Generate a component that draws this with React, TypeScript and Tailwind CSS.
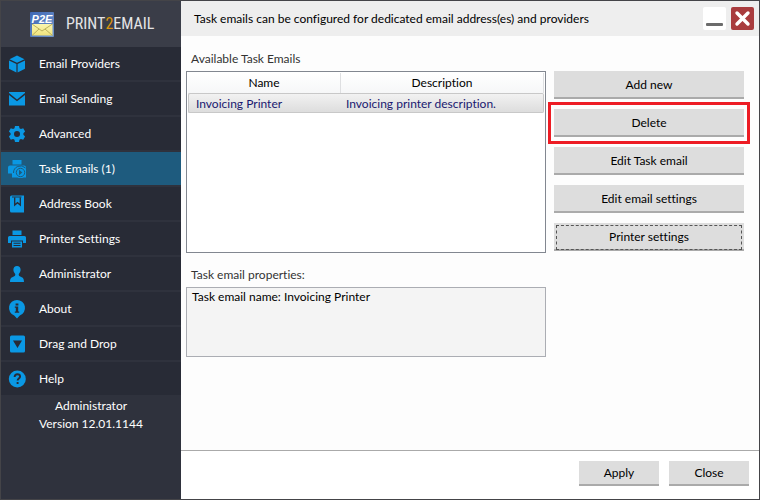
import { useState } from 'react';
import type { ReactNode } from 'react';
import clsx from 'clsx';

const ICONS: Record<string, ReactNode> = {
  cube: (
    <>
      <path d="M9 .5l7.500 3.700L9 7.800 1.500 4.200z" />
      <path d="M1 5.400l7.400 3.500v8.600L1 13.800zM17 5.400L9.600 8.900v8.600L17 13.800z" />
    </>
  ),
  mail: (
    <>
      <path d="M1 2h16v1L9 9.500 1 3z" />
      <path d="M1 5l8 6.300L17 5v10.500H1z" />
    </>
  ),
  gear: (
    <path
      fillRule="evenodd"
      d="M7 1h4l.5 2.300 1.400.8 2.300-.8 1.900 3.300-1.700 1.600v1.600l1.700 1.600-1.900 3.300-2.300-.8-1.400.8L11 17H7l-.5-2.300-1.400-.8-2.300.8-1.900-3.300 1.700-1.600V8.200L.9 6.600l1.900-3.300 2.300.8 1.400-.8zM9 6a3 3 0 100 6 3 3 0 000-6z"
    />
  ),
  task: (
    <>
      <path d="M4.500 0h9v4.500h-9z" />
      <path d="M2 5.500h14a2 2 0 012 2v10H4v-4H0v-6a2 2 0 012-2z" />
      <path d="M5.500 13a7 7 0 0112-5" fill="none" stroke="#1e5b7e" />
      <circle cx="12.500" cy="12.500" r="5.500" />
      <circle cx="12.500" cy="12.500" r="4.200" stroke="#1e5b7e" />
      <path d="M11 9.800l3.400 2.700-3.400 2.700z" fill="#1e5b7e" />
    </>
  ),
  book: (
    <>
      <path d="M3.500.5H16v17H3.500A1.500 1.500 0 012 16V2A1.500 1.500 0 013.500.5z" />
      <path d="M6.700 2.500V10l2.800-2.300 2.800 2.300V2.500" fill="none" stroke="#282b36" strokeWidth="1.300" />
      <path d="M4 2h9.500" stroke="#282b36" strokeWidth=".9" />
    </>
  ),
  printer: (
    <>
      <path d="M4.500.5h9V5h-9z" />
      <path d="M1.500 6h15A1.500 1.500 0 0118 7.500V13h-3v-2.500H3V13H0V7.500A1.500 1.500 0 011.500 6z" />
      <path fillRule="evenodd" d="M4 11.500h10v6H4zM5.500 12.700v1h7v-1zm0 2.200v1h7v-1z" />
    </>
  ),
  user: (
    <path d="M9 1c2.200 0 3.600 1.500 3.600 3.800 0 1.700-.8 3.200-1.800 4.200-.3 1.300.2 2 1.300 2.500 2.300.9 3.900 1.500 3.900 5.500H2c0-4 1.600-4.600 3.900-5.500C7 11 7.500 10.300 7.200 9c-1-1-1.800-2.500-1.800-4.200C5.400 2.500 6.800 1 9 1z" />
  ),
  about: (
    <path
      fillRule="evenodd"
      d="M9 0a8 8 0 012.800 15.500L9 18.500l-2.800-3A8 8 0 019 0zM7.600 3.500v2h2.800v-2zM6.800 6.500v1.200h1v3.800h-1v1.200h4.400v-1.200h-1v-5z"
    />
  ),
  drop: (
    <path fillRule="evenodd" d="M3.500.5h12A1.500 1.500 0 0117 2v14a1.500 1.500 0 01-1.500 1.500h-12A1.500 1.500 0 012 16V2A1.500 1.500 0 013.500.5zM5 5.500l4.500 7.500L14 5.500z" />
  ),
  help: (
    <>
      <circle cx="9.300" cy="9" r="8.500" />
      <path d="M6.600 7c0-1.700 1.100-2.800 2.800-2.800S12.100 5.200 12.100 6.600c0 2-2.500 2-2.500 4M9.600 12v2" fill="none" stroke="#282b36" strokeWidth="1.900" />
    </>
  ),
};

const NAV_ITEMS = [
  { id: 'providers', label: 'Email Providers', icon: 'cube' },
  { id: 'sending', label: 'Email Sending', icon: 'mail' },
  { id: 'advanced', label: 'Advanced', icon: 'gear' },
  { id: 'tasks', label: 'Task Emails (1)', icon: 'task' },
  { id: 'address', label: 'Address Book', icon: 'book' },
  { id: 'printer', label: 'Printer Settings', icon: 'printer' },
  { id: 'admin', label: 'Administrator', icon: 'user' },
  { id: 'about', label: 'About', icon: 'about' },
  { id: 'drop', label: 'Drag and Drop', icon: 'drop' },
  { id: 'help', label: 'Help', icon: 'help' },
];

const ACTIONS = ['Add new', 'Delete', 'Edit Task email', 'Edit email settings', 'Printer settings'];

function Logo() {
  return (
    <svg viewBox="0 0 24 25" className="h-[25px] w-6 shrink-0">
      <defs>
        <linearGradient id="logoBg" x1="0" y1="0" x2="1" y2="1">
          <stop offset="0" stopColor="#3f68b5" />
          <stop offset="1" stopColor="#6f94cb" />
        </linearGradient>
        <linearGradient id="logoMail" x1="0" y1="0" x2="0" y2="1">
          <stop offset="0" stopColor="#fbf6b0" />
          <stop offset="1" stopColor="#efe37c" />
        </linearGradient>
      </defs>
      <rect width="24" height="25" rx="1" fill="url(#logoBg)" />
      <text x="12" y="11" textAnchor="middle" fontSize="11" fontWeight="700" fontStyle="italic" fill="#fff" fontFamily="Liberation Sans, sans-serif">
        P2E
      </text>
      <rect x="2" y="12" width="20.500" height="11.500" fill="url(#logoMail)" />
      <path d="M2 12l10 7 10.500-7M2 23.500l7-6.500M22.500 23.500L15 17" fill="none" stroke="#b3a952" strokeWidth=".9" />
    </svg>
  );
}

function ActionButton({ label, focused, className }: { label: string; focused?: boolean; className?: string }) {
  return (
    <button
      className={clsx('relative border-b-2 border-[#aaaaaa] bg-[#dddddd] pt-px text-center hover:bg-[#d0d0d0]', className)}
    >
      {label}
      {focused && <span className="absolute inset-x-0.5 top-0.5 -bottom-px border border-dashed border-[#555]" />}
    </button>
  );
}

export default function App() {
  const [active, setActive] = useState('tasks');

  return (
    <div className="flex h-screen border border-[#444448] bg-white font-['Lato','Open_Sans',sans-serif] text-xs text-black [font-variant-ligatures:none]">
      {/* Sidebar */}
      <aside className="flex w-[180px] shrink-0 flex-col bg-[#2f323d] text-white">
        <div className="flex h-[46px] shrink-0 items-center gap-3 bg-[#3a3d48] pl-[29px]">
          <Logo />
          <span className="font-['Liberation_Sans_Narrow','Roboto_Condensed',Roboto,sans-serif] text-base text-[#e4e4e6]">
            PRINT<span className="text-[#d9950f]">2</span>EMAIL
          </span>
        </div>
        <nav className="flex flex-col gap-0.5">
          {NAV_ITEMS.map(item => (
            <button
              key={item.id}
              onClick={() => setActive(item.id)}
              className={clsx(
                'flex h-[33px] items-center gap-[13px] pl-[7px] text-left',
                active === item.id ? 'bg-[#1e5b7e]' : 'bg-[#282b36]'
              )}
            >
              <svg viewBox="0 0 18 18" className="h-[18px] w-[18px] overflow-visible fill-[#0a98e4]">
                {ICONS[item.icon]}
              </svg>
              {item.label}
            </button>
          ))}
        </nav>
        <div className="pt-0.5 text-center leading-[18px]">
          <p>Administrator</p>
          <p>Version 12.01.1144</p>
        </div>
      </aside>

      {/* Content */}
      <div className="flex min-w-0 flex-1 flex-col">
        <header className="flex h-[35px] shrink-0 items-center bg-[#eeeeee] pr-[5px] pl-[13px]">
          <h1 className="flex-1">Task emails can be configured for dedicated email address(es) and providers</h1>
          <div className="flex gap-[5px]">
            <button aria-label="Minimize" className="h-[23px] w-[23px] rounded-xs bg-white">
              <svg viewBox="0 0 23 23">
                <rect x="3" y="16" width="17" height="3" rx="1" fill="#6b6b6b" />
              </svg>
            </button>
            <button aria-label="Close window" className="h-[23px] w-[23px] rounded-xs bg-[#a93c3e]">
              <svg viewBox="0 0 23 23">
                <path d="M6 6l11 11M17 6L6 17" stroke="#fff" strokeWidth="3.400" strokeLinecap="round" />
              </svg>
            </button>
          </div>
        </header>

        <main className="flex-1 bg-[#fdfdfd] pt-3.5 pr-[15px] pl-[5px]">
          <h2 className="pl-[5px] leading-[18px] text-[#333]">Available Task Emails</h2>
          <div className="mt-[3px] flex gap-2">
            <div className="min-h-[182px] flex-1 border border-[#828790] bg-white px-px pt-px">
              <table className="w-full table-fixed border-separate border-spacing-0">
                <thead>
                  <tr className="h-5 bg-linear-to-b from-white to-[#f6f7f8]">
                    <th className="w-[153px] border-r border-[#dedfe1] font-normal">Name</th>
                    <th className="border-r border-[#dedfe1] font-normal">Description</th>
                  </tr>
                </thead>
                <tbody>
                  <tr className="h-5 bg-linear-to-b from-[#f3f3f3] to-[#dcdcdc] text-[#191970]">
                    <td className="rounded-l-xs border-y border-l border-[#c8c8c8] pt-px pl-[7px]">Invoicing Printer</td>
                    <td className="rounded-r-xs border-y border-r border-[#c8c8c8] pt-px pl-[5px]">Invoicing printer description.</td>
                  </tr>
                </tbody>
              </table>
            </div>
            <div className="flex w-[190px] shrink-0 flex-col gap-2.5">
              {ACTIONS.map(label => (
                <div key={label} className="relative flex flex-col">
                  <ActionButton label={label} focused={label === 'Printer settings'} className="h-7" />
                  {label === 'Delete' && (
                    <span className="pointer-events-none absolute -inset-x-1.5 -inset-y-[7px] border-3 border-[#ed1c24]" />
                  )}
                </div>
              ))}
            </div>
          </div>

          <div className="mt-[13px] mr-[198px] flex flex-col gap-[3px]">
            <label htmlFor="properties" className="pl-[5px] leading-[18px] text-[#333]">
              Task email properties:
            </label>
            <textarea
              id="properties"
              readOnly
              defaultValue="Task email name: Invoicing Printer"
              className="h-[70px] resize-none border border-[#abadb3] bg-[#f4f4f4] px-[5px] py-px leading-4 outline-none"
            />
          </div>
        </main>

        <footer className="flex h-[49px] shrink-0 items-start justify-end gap-2.5 border-t border-[#aaaaaa] bg-white pt-2.5 pr-2.5">
          <ActionButton label="Apply" className="h-[25px] w-20" />
          <ActionButton label="Close" className="h-[25px] w-20" />
        </footer>
      </div>
    </div>
  );
}
